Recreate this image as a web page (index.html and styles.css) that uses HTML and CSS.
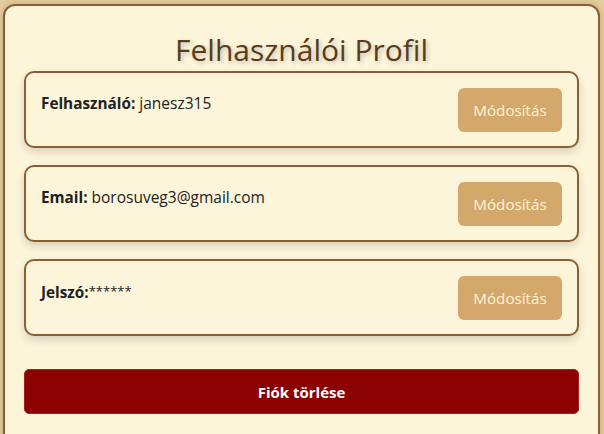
FILE: index.html
```html
<!DOCTYPE html>
<html lang="hu">
<head>
<meta charset="utf-8">
<title>Felhasználói Profil</title>
<link rel="stylesheet" href="styles.css">
</head>
<body>
<div class="profile">
  <h1 class="title">Felhasználói Profil</h1>
  <div class="card">
    <p class="field"><strong>Felhasználó:</strong> janesz315</p>
    <button class="edit">Módosítás</button>
  </div>
  <div class="card">
    <p class="field"><strong>Email:</strong> borosuveg3@gmail.com</p>
    <button class="edit">Módosítás</button>
  </div>
  <div class="card">
    <p class="field"><strong>Jelszó:</strong><span class="stars">******</span></p>
    <button class="edit">Módosítás</button>
  </div>
  <button class="delete">Fiók törlése</button>
</div>
</body>
</html>
```
FILE: styles.css
```css
html, body {
  margin: 0;
  padding: 0;
}
body {
  background: #e6cfa0;
  font-family: "Open Sans", "Noto Sans", sans-serif;
  color: #222;
  height: 434px;
  overflow: hidden;
}
.profile {
  margin: 4px 4px 0 3px;
  box-sizing: border-box;
  width: 597px;
  height: 460px;
  background: #fdf5da;
  border: 2px solid #8b5e34;
  border-radius: 12px;
  padding: 0 19px;
  box-shadow: 0 0 8px rgba(120, 80, 30, 0.3);
}
.title {
  margin: 0;
  padding-top: 23px;
  height: 42px;
  font-size: 30px;
  font-weight: 400;
  line-height: 42px;
  text-align: center;
  color: #5a3c1c;
  text-shadow: 2px 2px 4px rgba(0, 0, 0, 0.22);
}
.card {
  display: flex;
  justify-content: space-between;
  align-items: flex-start;
  height: 77px;
  box-sizing: border-box;
  border: 2px solid #8b5e34;
  border-radius: 10px;
  padding: 15px 15px 0 15px;
  margin-bottom: 17px;
  box-shadow: 0 4px 8px rgba(0, 0, 0, 0.15);
  background: #fdf5da;
}
.field {
  margin: 5px 0 0 0;
  font-size: 15.5px;
  line-height: 20px;
}
.field strong {
  font-weight: 700;
  font-size: 15.3px;
}
.stars {
  font-size: 13px;
  vertical-align: 2px;
}
.edit {
  width: 104px;
  height: 44px;
  border: none;
  border-radius: 6px;
  background: #d4a76a;
  color: #fdf5da;
  font-family: inherit;
  font-size: 15.2px;
  padding: 0;
}
.delete {
  display: block;
  width: 100%;
  height: 45px;
  margin-top: 33px;
  border: 1px solid #a32020;
  border-radius: 5px;
  background: #8b0000;
  color: #fff;
  font-family: inherit;
  font-weight: 700;
  font-size: 15px;
}
```
